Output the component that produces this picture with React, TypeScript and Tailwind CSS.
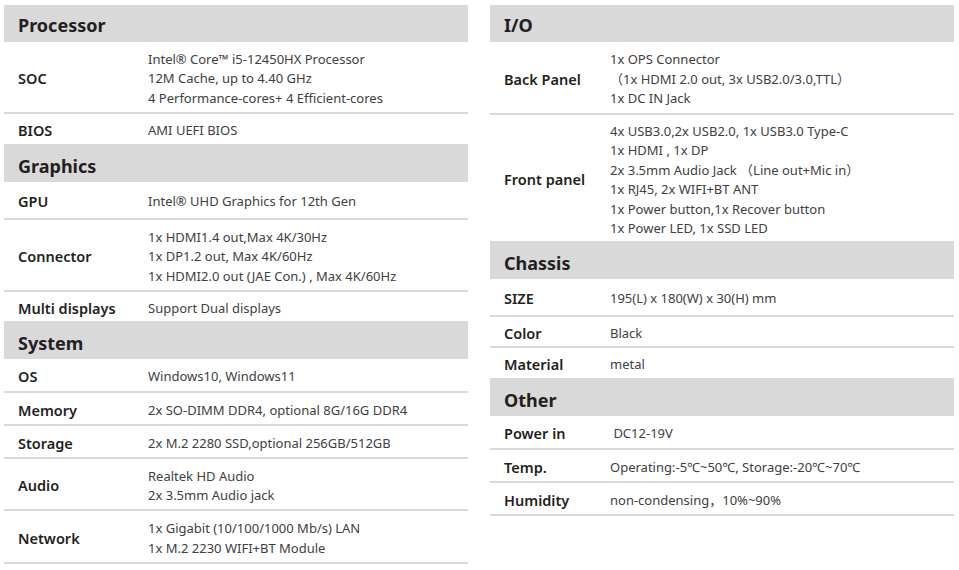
import React from 'react';

type Row = { label: string; lines: string[]; h: string };
type Section = { title: string; h: string; rows: Row[] };

const left: Section[] = [
  {
    title: 'Processor',
    h: 'h-[37px]',
    rows: [
      {
        label: 'SOC',
        h: 'h-[72px]',
        lines: [
          'Intel® Core™ i5-12450HX Processor',
          '12M Cache, up to 4.40 GHz',
          '4 Performance-cores+ 4 Efficient-cores',
        ],
      },
      { label: 'BIOS', h: 'h-[32px]', lines: ['AMI UEFI BIOS'] },
    ],
  },
  {
    title: 'Graphics',
    h: 'h-[36px]',
    rows: [
      { label: 'GPU', h: 'h-[38px]', lines: ['Intel® UHD Graphics for 12th Gen'] },
      {
        label: 'Connector',
        h: 'h-[72px]',
        lines: [
          '1x HDMI1.4 out,Max 4K/30Hz',
          '1x DP1.2 out, Max 4K/60Hz',
          '1x HDMI2.0 out (JAE Con.) , Max 4K/60Hz',
        ],
      },
      { label: 'Multi displays', h: 'h-[31px]', lines: ['Support Dual displays'] },
    ],
  },
  {
    title: 'System',
    h: 'h-[36px]',
    rows: [
      { label: 'OS', h: 'h-[34px]', lines: ['Windows10, Windows11'] },
      { label: 'Memory', h: 'h-[33px]', lines: ['2x SO-DIMM DDR4, optional 8G/16G DDR4'] },
      { label: 'Storage', h: 'h-[33px]', lines: ['2x M.2 2280 SSD,optional 256GB/512GB'] },
      { label: 'Audio', h: 'h-[52px]', lines: ['Realtek HD Audio', '2x 3.5mm Audio jack'] },
      {
        label: 'Network',
        h: 'h-[53px]',
        lines: ['1x Gigabit (10/100/1000 Mb/s) LAN', '1x M.2 2230 WIFI+BT Module'],
      },
    ],
  },
];

const right: Section[] = [
  {
    title: 'I/O',
    h: 'h-[37px]',
    rows: [
      {
        label: 'Back Panel',
        h: 'h-[73px]',
        lines: ['1x OPS Connector', '（1x HDMI 2.0 out, 3x USB2.0/3.0,TTL）', '1x DC IN Jack'],
      },
      {
        label: 'Front panel',
        h: 'h-[128px]',
        lines: [
          '4x USB3.0,2x USB2.0, 1x USB3.0 Type-C',
          '1x HDMI , 1x DP',
          '2x 3.5mm Audio Jack （Line out+Mic in）',
          '1x RJ45, 2x WIFI+BT ANT',
          '1x Power button,1x Recover button',
          '1x Power LED, 1x SSD LED',
        ],
      },
    ],
  },
  {
    title: 'Chassis',
    h: 'h-[36px]',
    rows: [
      { label: 'SIZE', h: 'h-[38px]', lines: ['195(L) x 180(W) x 30(H) mm'] },
      { label: 'Color', h: 'h-[31px]', lines: ['Black'] },
      { label: 'Material', h: 'h-[32px]', lines: ['metal'] },
    ],
  },
  {
    title: 'Other',
    h: 'h-[36px]',
    rows: [
      { label: 'Power in', h: 'h-[34px]', lines: [' DC12-19V'] },
      { label: 'Temp.', h: 'h-[33px]', lines: ['Operating:-5℃~50℃, Storage:-20℃~70℃'] },
      { label: 'Humidity', h: 'h-[33px]', lines: ['non-condensing，10%~90%'] },
    ],
  },
];

function SpecColumn({ sections, labelW }: { sections: Section[]; labelW: string }) {
  return (
    <div className="flex flex-col">
      {sections.map((s) => (
        <div key={s.title} className="flex flex-col">
          <div className={`${s.h} bg-[#d9d9d9] flex items-center px-[14px] pt-[3px]`}>
            <span className="text-[18px] font-bold text-[#231f20] leading-none">{s.title}</span>
          </div>
          {s.rows.map((r) => (
            <div key={r.label} className={`${r.h} flex items-center border-b-2 border-[#d9d9d9] px-[14px] pt-[4px]`}>
              <div className={`${labelW} shrink-0 text-[14.5px] font-semibold text-[#231f20]`}>{r.label}</div>
              <div className="flex flex-col text-[13px] leading-[19.5px] text-[#404040] whitespace-pre">
                {r.lines.map((l, i) => (
                  <span key={i}>{l}</span>
                ))}
              </div>
            </div>
          ))}
        </div>
      ))}
    </div>
  );
}

export default function App() {
  return (
    <div
      className="w-[959px] h-[570px] bg-white pt-[5px] pl-[4px]"
      style={{ fontFamily: '"Noto Sans", "Noto Sans CJK SC", sans-serif' }}
    >
      <div className="grid grid-cols-[464px_464px] gap-x-[22px] items-start">
        <SpecColumn sections={left} labelW="w-[130px]" />
        <SpecColumn sections={right} labelW="w-[106px]" />
      </div>
    </div>
  );
}
